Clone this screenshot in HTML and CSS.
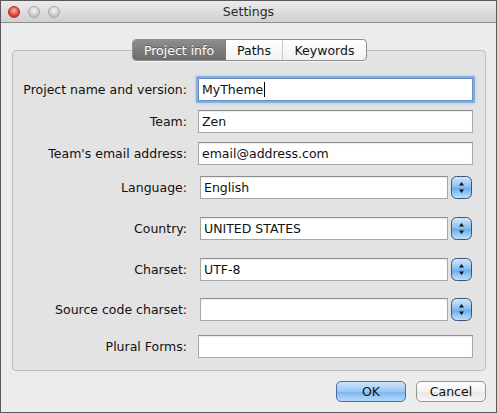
FILE: index.html
```html
<!DOCTYPE html>
<html>
<head>
<meta charset="utf-8">
<link rel="stylesheet" href="styles.css">
</head>
<body>
<div class="window">
  <div class="titlebar">
    <div class="lights">
      <span class="light red"></span>
      <span class="light"></span>
      <span class="light"></span>
    </div>
    <div class="title">Settings</div>
  </div>
  <div class="content">
    <div class="tabs">
      <div class="seg">
        <span class="tab selected">Project info</span>
        <span class="tab">Paths</span>
        <span class="tab last">Keywords</span>
      </div>
    </div>
    <div class="box">
      <div class="row r1">
        <label class="lbl">Project name and version:</label>
        <div class="field focus"><span class="val">MyTheme</span><span class="caret"></span></div>
      </div>
      <div class="row r2">
        <label class="lbl">Team:</label>
        <div class="field"><span class="val">Zen</span></div>
      </div>
      <div class="row r3">
        <label class="lbl">Team's email address:</label>
        <div class="field"><span class="val">email@address.com</span></div>
      </div>
      <div class="row r4">
        <label class="lbl">Language:</label>
        <div class="combo"><div class="field cfield"><span class="val">English</span></div><svg class="stepper" width="21" height="23" viewBox="0 0 21 23"><defs><linearGradient id="g1" x1="0" y1="0" x2="0" y2="1"><stop offset="0" stop-color="#d4e9fb"/><stop offset="0.45" stop-color="#8ec2f0"/><stop offset="0.55" stop-color="#6eaeea"/><stop offset="1" stop-color="#bfe4fd"/></linearGradient></defs><rect x="0.5" y="0.5" width="20" height="22" rx="5" fill="url(#g1)" stroke="#3c5478"/><path d="M10.5 6 L13 9.5 L8 9.5 Z M10.5 17 L13 13.5 L8 13.5 Z" fill="#111"/></svg></div>
      </div>
      <div class="row r5">
        <label class="lbl">Country:</label>
        <div class="combo"><div class="field cfield"><span class="val">UNITED STATES</span></div><svg class="stepper" width="21" height="23" viewBox="0 0 21 23"><rect x="0.5" y="0.5" width="20" height="22" rx="5" fill="url(#g1)" stroke="#3c5478"/><path d="M10.5 6 L13 9.5 L8 9.5 Z M10.5 17 L13 13.5 L8 13.5 Z" fill="#111"/></svg></div>
      </div>
      <div class="row r6">
        <label class="lbl">Charset:</label>
        <div class="combo"><div class="field cfield"><span class="val">UTF-8</span></div><svg class="stepper" width="21" height="23" viewBox="0 0 21 23"><rect x="0.5" y="0.5" width="20" height="22" rx="5" fill="url(#g1)" stroke="#3c5478"/><path d="M10.5 6 L13 9.5 L8 9.5 Z M10.5 17 L13 13.5 L8 13.5 Z" fill="#111"/></svg></div>
      </div>
      <div class="row r7">
        <label class="lbl">Source code charset:</label>
        <div class="combo"><div class="field cfield"><span class="val"></span></div><svg class="stepper" width="21" height="23" viewBox="0 0 21 23"><rect x="0.5" y="0.5" width="20" height="22" rx="5" fill="url(#g1)" stroke="#3c5478"/><path d="M10.5 6 L13 9.5 L8 9.5 Z M10.5 17 L13 13.5 L8 13.5 Z" fill="#111"/></svg></div>
      </div>
      <div class="row r8">
        <label class="lbl">Plural Forms:</label>
        <div class="field"><span class="val"></span></div>
      </div>
    </div>
    <div class="buttons">
      <button class="btn ok">OK</button>
      <button class="btn">Cancel</button>
    </div>
  </div>
</div>
</body>
</html>
```
FILE: styles.css
```css
* { box-sizing: border-box; }
html, body { margin: 0; padding: 0; }
body {
  width: 497px;
  height: 413px;
  font-family: "DejaVu Sans", "Liberation Sans", sans-serif;
  font-size: 12.5px;
  color: #111;
  background: #fff;
}
.window {
  width: 497px;
  height: 413px;
  border: 1px solid #5a5a5a;
  background: #ececec;
  display: flex;
  flex-direction: column;
}
.titlebar {
  height: 22px;
  background: linear-gradient(#ebebeb, #d0d0d0);
  border-bottom: 1px solid #8e8e8e;
  display: flex;
  align-items: center;
  position: relative;
  flex: none;
}
.lights {
  display: flex;
  gap: 8px;
  padding-left: 7px;
}
.light {
  width: 12px;
  height: 12px;
  border-radius: 50%;
  background: radial-gradient(circle at 50% 35%, #f4f4f4, #c9c9c9 60%, #b0b0b0);
  border: 1px solid #a8a8a8;
}
.light.red {
  background: radial-gradient(circle at 50% 35%, #ffb3ad, #e8463c 55%, #b8261e);
  border-color: #9c3028;
}
.title {
  position: absolute;
  left: 0;
  right: 0;
  top: 0;
  bottom: 0;
  display: flex;
  align-items: center;
  justify-content: center;
  font-size: 12.5px;
  color: #2a2a2a;
  pointer-events: none;
}
.content {
  padding: 16px 10px 0 11px;
  display: flex;
  flex-direction: column;
}
.tabs {
  display: flex;
  justify-content: center;
  position: relative;
  z-index: 1;
  height: 22px;
  width: 474px;
  padding-left: 1px;
}
.seg {
  display: flex;
  height: 22px;
  border: 1px solid #8f8f8f;
  border-radius: 4px;
  overflow: hidden;
  background: linear-gradient(#ffffff, #f1f1f1);
  box-shadow: 0 1px 0 rgba(255,255,255,0.6);
}
.tab {
  display: flex;
  align-items: center;
  justify-content: center;
  color: #111;
  border-right: 1px solid #c9c9c9;
}
.tab:nth-child(1) { width: 93px; }
.tab:nth-child(2) { width: 57px; }
.tab:nth-child(3) { width: 83px; }
.tab.last { border-right: none; }
.tab.selected {
  background: linear-gradient(#8e8e8e, #6c6c6c);
  color: #fff;
  text-shadow: 0 -1px 0 rgba(0,0,0,0.35);
  border-right: 1px solid #7a7a7a;
}
.box {
  margin-top: -11px;
  width: 474px;
  background: #e3e3e3;
  border: 1px solid #bcbcbc;
  border-radius: 4px;
  padding: 27px 12px 12px 0;
  display: flex;
  flex-direction: column;
}
.row {
  display: grid;
  grid-template-columns: 174px 1fr;
  column-gap: 11px;
  align-items: center;
  height: 23px;
}
.r2, .r3 { margin-top: 9px; }
.r4 { margin-top: 11px; }
.r5, .r6 { margin-top: 18px; }
.r7 { margin-top: 17px; }
.r8 { margin-top: 14px; }
.lbl {
  text-align: right;
  white-space: nowrap;
  color: #111;
}
.field {
  height: 23px;
  background: #fff;
  border: 1px solid #a7a7a7;
  border-top-color: #8e8e8e;
  display: flex;
  align-items: center;
  padding-left: 3px;
  box-shadow: inset 0 1px 1px rgba(0,0,0,0.08);
}
.field.focus {
  box-shadow: 0 0 0 2px #86ace0, 0 0 3px 2px #aac8ee;
  border-color: #6d8fc0;
}
.caret {
  width: 1px;
  height: 15px;
  background: #000;
  margin-left: 1px;
}
.combo {
  display: flex;
  align-items: center;
  gap: 3px;
  padding-left: 2px;
}
.cfield {
  width: 248px;
}
.stepper { flex: none; display: block; }
.buttons {
  display: flex;
  justify-content: flex-end;
  gap: 10px;
  margin-top: 10px;
  width: 474px;
}
.btn {
  width: 70px;
  height: 21px;
  font-family: "DejaVu Sans", "Liberation Sans", sans-serif;
  font-size: 12.5px;
  color: #111;
  border: 1px solid #959595;
  border-radius: 5px;
  background: linear-gradient(#ffffff, #f2f2f2 50%, #e6e6e6 51%, #f7f7f7);
  padding: 0;
}
.btn.ok {
  border-color: #4f6e9f;
  background: linear-gradient(#cfe4fa, #99c7f2 50%, #7ab5ee 51%, #b6dcfb);
}
```
